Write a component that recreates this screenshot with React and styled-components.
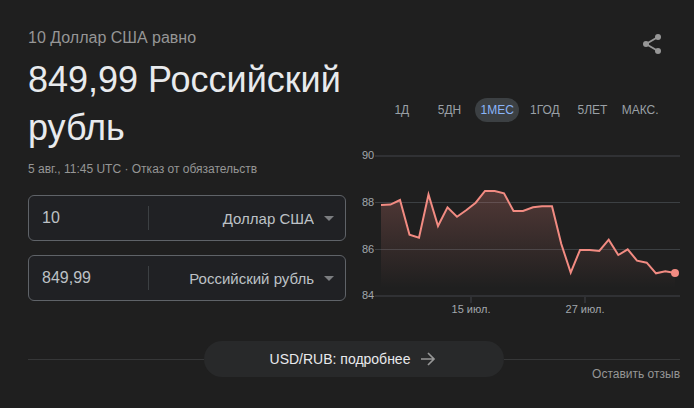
import React, { useState } from "react";
import styled, { createGlobalStyle } from "styled-components";

const GlobalStyle = createGlobalStyle`
  * { box-sizing: border-box; }
  body {
    margin: 0;
    background: #1f1f1f;
    color: #e8eaed;
    font-family: "Liberation Sans", Arial, sans-serif;
  }
  button, input, select { font-family: inherit; }
`;

const Card = styled.main`
  padding: 26px 14px 24px 28px;
`;

const Columns = styled.div`
  display: grid;
  grid-template-columns: 318fr 320fr;
  gap: 14px;
`;

const Converter = styled.section`
  display: flex;
  flex-direction: column;
  min-width: 0;
`;

const Caption = styled.div`
  color: #969696;
  font-size: 16px;
  line-height: 24px;
`;

const Result = styled.h1`
  margin: 6px 0 10px;
  font-size: 36px;
  font-weight: 400;
  line-height: 48px;
`;

const Note = styled.div`
  margin-bottom: 18px;
  color: #969696;
  font-size: 12px;
  line-height: 15px;
`;

const QuietLink = styled.a`
  color: #969696;
  font-size: 12px;
  text-decoration: none;
`;

const Field = styled.div`
  display: flex;
  align-items: center;
  height: 46px;
  padding-right: 11px;
  border: 1px solid #5f6368;
  border-radius: 6px;
  background: #202124;

  & + & { margin-top: 14px; }
`;

const Amount = styled.input`
  flex: 0 0 120px;
  width: 120px;
  height: 24px;
  padding: 0 0 0 13px;
  border: 0;
  border-right: 1px solid #3c4043;
  outline: 0;
  background: transparent;
  color: #bdc1c6;
  font-size: 16px;
`;

const Currency = styled.select`
  flex: 1;
  min-width: 0;
  height: 40px;
  margin-right: 10px;
  padding: 0;
  border: 0;
  outline: 0;
  appearance: none;
  background: transparent;
  color: #bdc1c6;
  font-size: 15px;
  text-align: right;
  text-align-last: right;

  option { background: #202124; }
`;

const History = styled.section`
  display: flex;
  flex-direction: column;
  min-width: 0;
`;

const ShareButton = styled.button`
  display: flex;
  align-self: flex-end;
  margin: 6px 16px 0 0;
  padding: 0;
  border: 0;
  background: none;
  color: #969696;
  cursor: pointer;
`;

const Periods = styled.div`
  display: grid;
  grid-template-columns: repeat(6, 1fr);
  justify-items: center;
  margin: 42px 16px 22px 18px;
`;

const Period = styled.button`
  min-width: 44px;
  height: 24px;
  padding: 0;
  border: 0;
  border-radius: 12px;
  background: ${({ $active }) => ($active ? "#3c4043" : "transparent")};
  color: ${({ $active }) => ($active ? "#8ab4f8" : "#9aa0a6")};
  font-size: 12px;
  cursor: pointer;
`;

const Chart = styled.svg`
  display: block;
  width: 100%;
  overflow: visible;

  text { fill: #a2a7ad; font-size: 11px; }
`;

const Footer = styled.footer`
  margin-top: 21px;
`;

const More = styled.div`
  display: flex;
  align-items: center;

  &::before, &::after {
    content: "";
    flex: 1;
    height: 1px;
    background: #363738;
  }
`;

const MoreLink = styled.a`
  display: flex;
  align-items: center;
  justify-content: center;
  gap: 10px;
  width: 300px;
  height: 36px;
  border-radius: 18px;
  background: #28292a;
  color: #e8eaed;
  font-size: 14px;
  text-decoration: none;

  svg { color: #969696; }
`;

const Feedback = styled.div`
  margin-top: -12px;
  line-height: 16px;
  text-align: right;
`;

const periods = ["1Д", "5ДН", "1МЕС", "1ГОД", "5ЛЕТ", "МАКС."];
const currencies = ["Доллар США", "Российский рубль"];

const gridLines = [
  { label: "90", y: 12, width: 2, color: "#303134" },
  { label: "88", y: 58.5, width: 1, color: "#3c4043" },
  { label: "86", y: 105.5, width: 1, color: "#3c4043" },
  { label: "84", y: 152, width: 2, color: "#303134" },
];

const ticks = [
  { label: "15 июл.", x: 111 },
  { label: "27 июл.", x: 225 },
];

const points = [
  [21, 61], [30.5, 60.6], [40, 56], [49.5, 90.7], [59, 93.7], [68.5, 50.5],
  [78, 82], [87.5, 63.3], [97, 72.7], [106.5, 66], [115.7, 58.7], [125, 47],
  [134.7, 47], [144, 49.3], [153.5, 67], [163, 67], [173, 63.3], [182, 62.3],
  [192, 62.3], [201.3, 100], [210.7, 128.6], [220, 106], [229.7, 106],
  [239.3, 107], [248.7, 95.7], [258.3, 111], [267.7, 105.3], [277, 116.7],
  [286.7, 118.7], [296, 129.3], [305.3, 127.3], [315, 129],
];

const line = points.map(([x, y]) => `${x},${y}`).join(" ");
const area = `21,144 ${line} 315,144`;

function Caret() {
  return (
    <svg width="10" height="5" viewBox="0 0 10 5" aria-hidden="true">
      <path d="M0 0h10L5 5z" fill="#7b7d80" />
    </svg>
  );
}

function CurrencyField({ amount, currency, name }) {
  return (
    <Field>
      <Amount aria-label={`Сумма, ${name}`} defaultValue={amount} />
      <Currency aria-label={`Валюта, ${name}`} defaultValue={currency}>
        {currencies.map((item) => (
          <option key={item}>{item}</option>
        ))}
      </Currency>
      <Caret />
    </Field>
  );
}

function RateChart() {
  return (
    <Chart viewBox="0 0 320 176" role="img" aria-label="Курс USD/RUB за месяц">
      <defs>
        <linearGradient id="rateFill" gradientUnits="userSpaceOnUse" x1="0" y1="47" x2="0" y2="144">
          <stop offset="0" stopColor="#f28b82" stopOpacity="0.24" />
          <stop offset="1" stopColor="#f28b82" stopOpacity="0" />
        </linearGradient>
      </defs>
      {gridLines.map(({ label, y, width, color }) => (
        <g key={label}>
          <line x1="15" x2="320" y1={y} y2={y} stroke={color} strokeWidth={width} />
          <text x="2" y={y + 3}>{label}</text>
        </g>
      ))}
      {ticks.map(({ label, x }) => (
        <g key={label}>
          <line x1={x} x2={x} y1="152" y2="159" stroke="#303134" strokeWidth="2" />
          <text x={x} y="169" textAnchor="middle">{label}</text>
        </g>
      ))}
      <polygon points={area} fill="url(#rateFill)" />
      <polyline points={line} fill="none" stroke="#f28b82" strokeWidth="2" />
      <circle cx="315" cy="129" r="4" fill="#f28b82" />
    </Chart>
  );
}

export default function App() {
  const [active, setActive] = useState("1МЕС");

  return (
    <>
      <GlobalStyle />
      <Card>
        <Columns>
          <Converter>
            <Caption>10 Доллар США равно</Caption>
            <Result>849,99 Российский рубль</Result>
            <Note>
              5 авг., 11:45 UTC · <QuietLink href="#disclaimer">Отказ от обязательств</QuietLink>
            </Note>
            <CurrencyField name="из" amount="10" currency="Доллар США" />
            <CurrencyField name="в" amount="849,99" currency="Российский рубль" />
          </Converter>
          <History>
            <ShareButton type="button" aria-label="Поделиться">
              <svg width="24" height="24" viewBox="0 0 24 24" fill="currentColor" aria-hidden="true">
                <path d="M6 12 18 5M6 12l12 7" stroke="currentColor" strokeWidth="2" />
                <circle cx="6" cy="12" r="3" />
                <circle cx="18" cy="5" r="3" />
                <circle cx="18" cy="19" r="3" />
              </svg>
            </ShareButton>
            <Periods>
              {periods.map((label) => (
                <Period
                  key={label}
                  type="button"
                  aria-pressed={label === active}
                  $active={label === active}
                  onClick={() => setActive(label)}
                >
                  {label}
                </Period>
              ))}
            </Periods>
            <RateChart />
          </History>
        </Columns>
        <Footer>
          <More>
            <MoreLink href="#usd-rub">
              USD/RUB: подробнее
              <svg width="18" height="18" viewBox="0 0 18 18" fill="none" stroke="currentColor" strokeWidth="1.7" aria-hidden="true">
                <path d="M1 9h13M8 3l6 6-6 6" />
              </svg>
            </MoreLink>
          </More>
          <Feedback>
            <QuietLink href="#feedback">Оставить отзыв</QuietLink>
          </Feedback>
        </Footer>
      </Card>
    </>
  );
}
